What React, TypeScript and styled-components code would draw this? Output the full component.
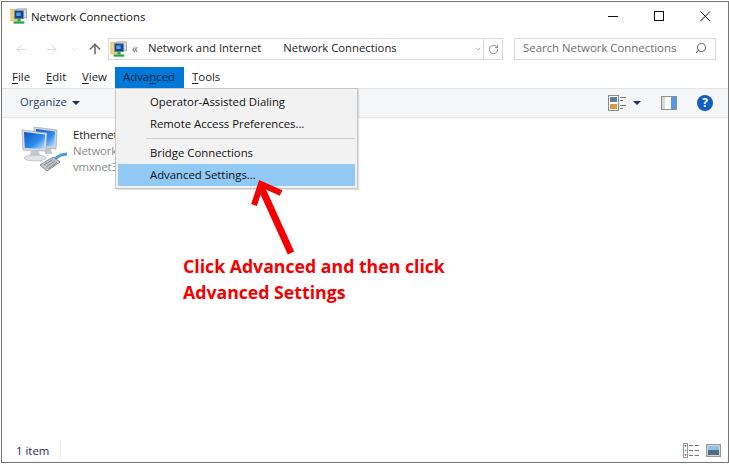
import React from "react";
import styled, { createGlobalStyle } from "styled-components";
import { ArrowLeft, ArrowRight, ArrowUp, ChevronDown, RotateCw, Search } from "lucide-react";

const GlobalStyle = createGlobalStyle`
  html, body {
    margin: 0;
    padding: 0;
    background: #fff;
  }
  body {
    font-family: "Open Sans", "Noto Sans", "Liberation Sans", sans-serif;
    font-size: 12px;
    color: #1a1a1a;
  }
`;

const Frame = styled.div`
  position: relative;
  box-sizing: border-box;
  width: 729px;
  height: 464px;
  overflow: hidden;
  padding: 1px 0 1px 1px;
`;
const Win = styled.div`
  box-sizing: border-box;
  width: 728px;
  height: 462px;
  border: 1px solid #757575;
  display: flex;
  flex-direction: column;
  background: #fff;
`;
const TitleBar = styled.div`
  height: 29px;
  flex: none;
  display: flex;
  align-items: center;
  padding-left: 8px;
`;
const Title = styled.span`
  margin-left: 4px;
  font-size: 11.4px;
  color: #111;
`;
const Spacer = styled.div`
  flex: 1;
`;
const WinButton = styled.div`
  width: 46px;
  height: 29px;
  display: flex;
  align-items: center;
  justify-content: center;
`;
const AddressRow = styled.div`
  height: 22px;
  flex: none;
  margin-top: 7px;
  display: flex;
  align-items: center;
  padding-left: 4px;
`;
const NavButton = styled.div<{ $w: number; $dark?: boolean }>`
  width: ${(p) => p.$w}px;
  height: 22px;
  display: flex;
  align-items: center;
  justify-content: center;
  color: ${(p) => (p.$dark ? "#6d6d6d" : "#dadada")};
`;
const AddressBox = styled.div`
  box-sizing: border-box;
  width: 395px;
  height: 22px;
  border: 1px solid #d9d9d9;
  display: flex;
  align-items: center;
  padding-left: 1px;
  font-size: 11.3px;
  line-height: 18px;
`;
const Crumbs = styled.span`
  color: #666;
  margin: 0 10px 0 5px;
  font-size: 12px;
`;
const Crumb = styled.span`
  color: #1c1c1c;
  margin: 0 22px 2px 0;
`;
const AddressChevron = styled.div`
  margin-left: auto;
  display: flex;
  color: #9a9a9a;
  padding-right: 1px;
`;
const RefreshBox = styled.div`
  width: 18px;
  height: 20px;
  border-left: 1px solid #d9d9d9;
  display: flex;
  align-items: center;
  justify-content: center;
  color: #666;
`;
const SearchBox = styled.div`
  box-sizing: border-box;
  width: 202px;
  height: 22px;
  margin-left: 11px;
  border: 1px solid #d9d9d9;
  display: flex;
  align-items: center;
  justify-content: space-between;
  padding: 0 8px 2px;
  font-size: 11.4px;
  line-height: 18px;
  color: #6d6d6d;
`;
const MenuBar = styled.div`
  height: 21px;
  flex: none;
  margin-top: 7px;
  display: flex;
  padding-left: 2px;
`;
const MenuItem = styled.div<{ $active?: boolean; $w: number }>`
  box-sizing: border-box;
  width: ${(p) => p.$w}px;
  height: 21px;
  padding-left: 8px;
  line-height: 20px;
  font-size: 11.4px;
  color: ${(p) => (p.$active ? "#06233d" : "#1a1a1a")};
  background: ${(p) => (p.$active ? "#0078d7" : "transparent")};
  u {
    text-underline-offset: 2px;
    text-decoration-thickness: 1px;
  }
`;
const Toolbar = styled.div`
  height: 30px;
  flex: none;
  box-sizing: border-box;
  display: flex;
  align-items: center;
  background: #f5f6f7;
  border-top: 1px solid #e3e3e3;
  border-bottom: 1px solid #e8e8e8;
  padding: 0 15px 0 18px;
`;
const Organize = styled.span`
  color: #1e3a6e;
  font-size: 11.2px;
  line-height: 16px;
  margin: 0 5px 2px 0;
`;
const Caret = styled.span`
  width: 0;
  height: 0;
  border-left: 4px solid transparent;
  border-right: 4px solid transparent;
  border-top: 4px solid #1f2a60;
`;
const ToolGroup = styled.div`
  margin-left: auto;
  display: flex;
  align-items: center;
  gap: 20px;
`;
const ViewSwitch = styled.div`
  display: flex;
  align-items: center;
  gap: 7px;
`;
const Content = styled.div`
  flex: 1;
  padding: 9px 0 0 18px;
  display: flex;
  gap: 5px;
`;
const ItemText = styled.div`
  font-size: 11.4px;
  line-height: 16px;
  letter-spacing: -0.2px;
  color: #888;
`;
const ItemName = styled.div`
  color: #1a1a1a;
`;
const StatusBar = styled.div`
  height: 23px;
  flex: none;
  display: flex;
  align-items: center;
  padding: 3px 7px 0 14px;
  justify-content: space-between;
  font-size: 11.4px;
  color: #1c2b50;
`;
const StatusLabel = styled.span`
  display: block;
  width: 44px;
  height: 18px;
  line-height: 18px;
  border-right: 1px solid #eeeeee;
`;
const StatusIcons = styled.div`
  display: flex;
  align-items: center;
  gap: 7px;
`;
const DropMenu = styled.div`
  position: absolute;
  left: 115px;
  top: 88px;
  box-sizing: border-box;
  width: 243px;
  height: 101px;
  background: #f2f2f2;
  border: 1px solid #c6c6c6;
  box-shadow: 1px 1px 1px rgba(0, 0, 0, 0.12);
  padding: 2px;
  font-size: 11.35px;
`;
const DropItem = styled.div<{ $hot?: boolean }>`
  height: 22px;
  line-height: 22px;
  padding-left: 32px;
  color: #111;
  background: ${(p) => (p.$hot ? "#91c9f7" : "transparent")};
`;
const DropSep = styled.div`
  height: 1px;
  background: #cfcfcf;
  margin: 3px 0 3px 28px;
`;
const Overlay = styled.svg`
  position: absolute;
  left: 0;
  top: 0;
  pointer-events: none;
`;
const Note = styled.div`
  position: absolute;
  left: 183px;
  top: 253px;
  color: #f40000;
  font-weight: 700;
  font-size: 17.7px;
  line-height: 26px;
  white-space: nowrap;
`;

const NetSmall = () => (
  <svg width="17" height="17" viewBox="0 0 19 19">
    <rect x="1" y="1.5" width="11" height="13" fill="#f5d27a" stroke="#c9a24e" strokeWidth="0.6" />
    <rect x="7.5" y="1" width="11" height="10" fill="#d5d8dc" stroke="#8e959c" strokeWidth="0.8" />
    <rect x="5" y="3" width="10" height="9" fill="#12458f" stroke="#7d8a99" strokeWidth="0.8" />
    <rect x="7" y="5" width="5" height="4" fill="#4aa3ea" />
    <rect x="8.5" y="12" width="3" height="3" fill="#22a455" />
    <rect x="4" y="15" width="12" height="2.5" fill="#1fa84f" />
  </svg>
);

const NetLarge = () => (
  <svg width="48" height="48" viewBox="0 0 48 48">
    <defs>
      <linearGradient id="scr" x1="0" y1="0" x2="1" y2="1">
        <stop offset="0" stopColor="#0f55c4" />
        <stop offset="0.6" stopColor="#2f8cf0" />
        <stop offset="1" stopColor="#cfe6fa" />
      </linearGradient>
    </defs>
    {/* back monitor */}
    <path d="M14 0 L37 3 L36 22 L14 20 Z" fill="#d3d7dc" stroke="#9aa3ae" strokeWidth="0.7" />
    <path d="M16 2 L35 4.5 L34 20 L16 18 Z" fill="url(#scr)" />
    <path d="M25 22 L31 22 L32 27 L25 27 Z" fill="#c2c7cd" />
    {/* front monitor */}
    <path d="M2 3 L27 6 L26 24 L3 23 Z" fill="#dde0e4" stroke="#9aa3ae" strokeWidth="0.7" />
    <path d="M4 5 L25 7.6 L24.2 22 L4.8 21 Z" fill="url(#scr)" />
    <path d="M11 23 L19 24 L20 29 L10 29 Z" fill="#c6cacf" />
    <ellipse cx="15" cy="31" rx="11" ry="3" fill="#e2e4e7" stroke="#aab0b7" strokeWidth="0.6" />
    {/* plug and cable */}
    <path d="M33 33 L41 28 L47 27" stroke="#4d9cdc" strokeWidth="3" fill="none" />
    <path d="M20 38 L33 30 L40 35 L27 44 Z" fill="#c4c8cc" stroke="#6f767d" strokeWidth="0.8" />
    <path d="M24 38 L33 32.5 M26 40 L35 34 M28.5 41.5 L37 35.5" stroke="#6f767d" strokeWidth="0.8" />
  </svg>
);

const ViewIcon = () => (
  <svg width="18" height="16" viewBox="0 0 18 16">
    <rect x="0.5" y="0.5" width="10" height="15" fill="#fff" stroke="#8b8b8b" />
    <rect x="2" y="2" width="7" height="5" fill="#5b7f9e" />
    <rect x="2" y="9" width="7" height="5" fill="#d99a44" />
    <path d="M12 2.5h6M12 5.5h3M12 10.5h6M12 13.5h3" stroke="#777" strokeWidth="1" />
  </svg>
);

const PaneIcon = () => (
  <svg width="16" height="14" viewBox="0 0 16 14">
    <rect x="0.5" y="0.5" width="15" height="13" fill="#fff" stroke="#8f8f8f" />
    <rect x="1" y="1" width="3" height="12" fill="#d8d8d8" />
    <rect x="10" y="1" width="5" height="12" fill="#4f9be8" />
  </svg>
);

const HelpIcon = () => (
  <svg width="16" height="16" viewBox="0 0 16 16">
    <circle cx="8" cy="8" r="8" fill="#0f5fc2" />
    <text x="8" y="12.3" textAnchor="middle" fontSize="12" fontWeight="700" fill="#fff" fontFamily="'Open Sans', sans-serif">?</text>
  </svg>
);

const DetailsIcon = () => (
  <svg width="16" height="15" viewBox="0 0 16 15">
    <rect x="0.5" y="0.5" width="4" height="14" fill="#fff" stroke="#9a9a9a" />
    <rect x="1.7" y="2" width="1.6" height="1.6" fill="#555" />
    <rect x="1.7" y="6.5" width="1.6" height="1.6" fill="#6aa0d8" />
    <rect x="1.7" y="11" width="1.6" height="1.6" fill="#d33" />
    <path d="M6 2.5h4M11.5 2.5h4.5M6 7.5h4M11.5 7.5h4.5M6 12.5h4M11.5 12.5h4.5" stroke="#777" />
  </svg>
);

const TilesIcon = () => (
  <svg width="15" height="13" viewBox="0 0 15 13">
    <rect x="0.7" y="0.7" width="13.6" height="11.6" fill="#fff" stroke="#979797" strokeWidth="1.4" />
    <rect x="2" y="2" width="11" height="4" fill="#8fc0ea" />
    <rect x="2" y="6" width="11" height="5" fill="#4f6f86" />
  </svg>
);

export default function App() {
  return (
    <Frame>
      <GlobalStyle />
      <Win>
        <TitleBar>
          <NetSmall />
          <Title>Network Connections</Title>
          <Spacer />
          <WinButton>
            <svg width="11" height="11" viewBox="0 0 11 11">
              <path d="M0 5.5h10" stroke="#111" />
            </svg>
          </WinButton>
          <WinButton>
            <svg width="11" height="11" viewBox="0 0 11 11">
              <rect x="0.5" y="0.5" width="9" height="9" fill="none" stroke="#111" />
            </svg>
          </WinButton>
          <WinButton>
            <svg width="11" height="11" viewBox="0 0 11 11">
              <path d="M0.5 0.5l9.5 9.5M10 0.5L0.5 10" stroke="#111" />
            </svg>
          </WinButton>
        </TitleBar>
        <AddressRow>
          <NavButton $w={30}>
            <ArrowLeft size={15} strokeWidth={1.6} />
          </NavButton>
          <NavButton $w={30}>
            <ArrowRight size={15} strokeWidth={1.6} />
          </NavButton>
          <NavButton $w={16}>
            <ChevronDown size={9} strokeWidth={1.8} />
          </NavButton>
          <NavButton $w={26} $dark>
            <ArrowUp size={16} strokeWidth={2.4} />
          </NavButton>
          <AddressBox>
            <NetSmall />
            <Crumbs>«</Crumbs>
            <Crumb>Network and Internet</Crumb>
            <Crumb>Network Connections</Crumb>
            <AddressChevron>
              <ChevronDown size={8} strokeWidth={2} />
            </AddressChevron>
            <RefreshBox>
              <RotateCw size={11} strokeWidth={1.6} />
            </RefreshBox>
          </AddressBox>
          <SearchBox>
            <span>Search Network Connections</span>
            <Search size={12} strokeWidth={2.2} style={{ transform: "scaleX(-1)" }} />
          </SearchBox>
        </AddressRow>
        <MenuBar>
          <MenuItem $w={34}>
            <u>F</u>ile
          </MenuItem>
          <MenuItem $w={36}>
            <u>E</u>dit
          </MenuItem>
          <MenuItem $w={41}>
            <u>V</u>iew
          </MenuItem>
          <MenuItem $w={69} $active>
            Adva<u>n</u>ced
          </MenuItem>
          <MenuItem $w={50}>
            <u>T</u>ools
          </MenuItem>
        </MenuBar>
        <Toolbar>
          <Organize>Organize</Organize>
          <Caret />
          <ToolGroup>
            <ViewSwitch>
              <ViewIcon />
              <Caret />
            </ViewSwitch>
            <PaneIcon />
            <HelpIcon />
          </ToolGroup>
        </Toolbar>
        <Content>
          <NetLarge />
          <ItemText>
            <ItemName>Ethernet</ItemName>
            <div>Network</div>
            <div>vmxnet3</div>
          </ItemText>
        </Content>
        <StatusBar>
          <StatusLabel>1 item</StatusLabel>
          <StatusIcons>
            <DetailsIcon />
            <TilesIcon />
          </StatusIcons>
        </StatusBar>
      </Win>
      <DropMenu>
        <DropItem>Operator-Assisted Dialing</DropItem>
        <DropItem>Remote Access Preferences...</DropItem>
        <DropSep />
        <DropItem>Bridge Connections</DropItem>
        <DropItem $hot>Advanced Settings...</DropItem>
      </DropMenu>
      <Overlay width="729" height="464" viewBox="0 0 729 464">
        <path d="M291 253 L261 187" stroke="#f40000" strokeWidth="7" fill="none" />
        <path d="M254 205 L261 184 L281 193" stroke="#f40000" strokeWidth="6" fill="none" />
      </Overlay>
      <Note>
        Click Advanced and then click
        <br />
        Advanced Settings
      </Note>
    </Frame>
  );
}
